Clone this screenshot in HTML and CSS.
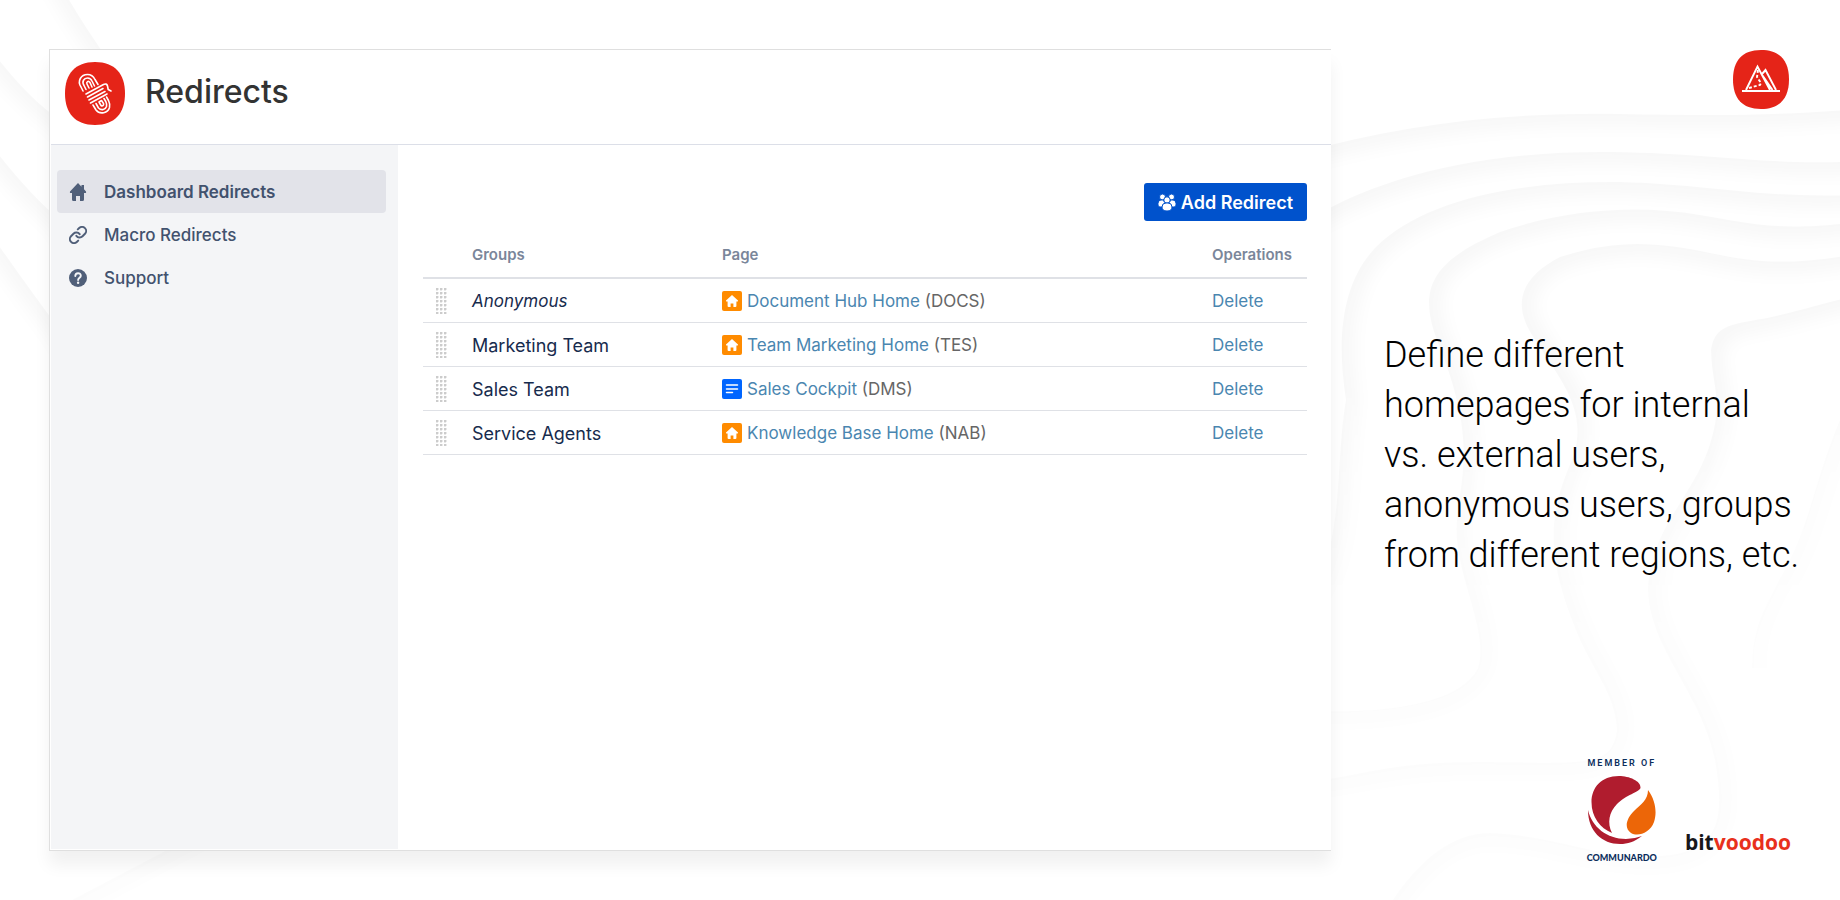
FILE: index.html
```
<!DOCTYPE html>
<html lang="en">
<head>
  <meta charset="UTF-8">
  <meta name="viewport" content="width=device-width, initial-scale=1.0">
  <title>Redirects</title>
  <link rel="stylesheet" href="styles.css">
</head>
<body>
  <!-- shared icons -->
  <svg class="sprite" aria-hidden="true">
    <symbol id="icon-home-page" viewBox="0 0 20 20">
      <rect width="20" height="20" rx="2" fill="#ff8b00"/>
      <path d="M10 4 4 9.600q-.3.900.6.900h1V15q0 1 1 1h2v-3.500h2.800V16h2q1 0 1-1v-4.500h1q.9 0 .6-.9z" fill="#fff"/>
    </symbol>
    <symbol id="icon-page" viewBox="0 0 20 20">
      <rect width="20" height="20" rx="2" fill="#0065ff"/>
      <path d="M4.500 6h11M4.500 10h11M4.500 13.500h6" stroke="#fff" stroke-width="1.500" stroke-linecap="round"/>
    </symbol>
  </svg>

  <!-- background relief: every contour is shaded on its inner side only -->
  <svg class="waves" viewBox="0 0 1840 900" preserveAspectRatio="xMaxYMid slice" aria-hidden="true">
    <defs>
      <filter id="soft" x="-20%" y="-20%" width="140%" height="140%"><feGaussianBlur stdDeviation="11"/></filter>
      <path id="w1" d="M30 -80C60 -10 80 40 300 300L1300 153C1400 125 1500 112 1620 114S1790 116 1920 104V980H-80V-80z"/>
      <path id="w2" d="M-80 -60Q0 80 60 120L300 400L1300 225C1370 180 1470 152 1600 152S1780 172 1920 156V980H-80z"/>
      <path id="w3" d="M-80 40Q0 170 60 220L300 600L1310 600C1345 540 1335 460 1346 400C1335 330 1345 280 1375 248C1420 202 1510 182 1610 182S1780 206 1920 190V980H-80z"/>
      <path id="w4" d="M-80 130Q0 250 60 330L300 700L1300 710C1380 715 1460 705 1478 668C1490 630 1452 570 1457 520S1475 440 1441 350C1415 290 1430 262 1500 232C1570 208 1640 205 1700 215S1790 236 1920 212V980H-80z"/>
      <path id="w5" d="M-80 980L300 780L1300 782C1360 778 1380 762 1480 762S1612 770 1617 730C1615 690 1590 670 1572 620C1545 550 1550 510 1572 460C1590 410 1560 380 1532 335C1510 300 1525 275 1560 257C1620 238 1660 243 1710 253S1800 270 1920 240V980z"/>
      <path id="w6" d="M1350 980C1385 900 1430 833 1490 833C1560 836 1600 860 1660 856S1725 820 1715 760C1700 690 1650 650 1648 590C1650 530 1690 500 1708 450C1725 400 1712 390 1711 350C1715 320 1740 325 1780 315S1850 296 1920 280V980z"/>
      <path id="w7" d="M1920 260L1840 420C1815 480 1810 520 1790 560S1752 620 1752 668L1800 980H1920z"/>
      <clipPath id="c1"><use href="#w1"/></clipPath>
      <clipPath id="c2"><use href="#w2"/></clipPath>
      <clipPath id="c3"><use href="#w3"/></clipPath>
      <clipPath id="c4"><use href="#w4"/></clipPath>
      <clipPath id="c5"><use href="#w5"/></clipPath>
      <clipPath id="c6"><use href="#w6"/></clipPath>
      <clipPath id="c7"><path d="M1920 260L1840 420C1815 480 1810 520 1790 560S1752 620 1752 668L1920 668z"/></clipPath>
    </defs>
    <g clip-path="url(#c1)"><use href="#w1" class="wave"/></g>
    <g clip-path="url(#c2)"><use href="#w2" class="wave"/></g>
    <g clip-path="url(#c3)"><use href="#w3" class="wave"/></g>
    <g clip-path="url(#c4)"><use href="#w4" class="wave"/></g>
    <g clip-path="url(#c5)"><use href="#w5" class="wave"/></g>
    <g clip-path="url(#c6)"><use href="#w6" class="wave"/></g>
    <g clip-path="url(#c7)"><use href="#w7" class="wave faint"/></g>
  </svg>

  <div class="layout">
    <main class="panel">
      <header class="panel-header">
        <svg class="app-logo" viewBox="0 0 60 63" aria-hidden="true">
          <path d="M30 0C50 0 60 12 60 31.500S50 63 30 63 0 51 0 31.500 10 0 30 0z" fill="#e52418"/>
          <g fill="none" stroke="#fff" stroke-width="1.600" stroke-linecap="round" stroke-linejoin="round">
            <path d="M18 29l-2-4c-4-6 0-12.500 6.500-12.500 4 0 6 2 7.500 5l3 5"/>
            <path d="M21 27.500l-2-4c-2.500-4 0-7.500 3.500-7.500 2.500 0 3.700 1 4.500 3l2.500 5"/>
            <path d="M24 26l-2-4c-1-2 1.500-4 3-1.500l2 4.500"/>
            <path d="M21 32l17.500-9.500c2-1 3.500-.5 4 1.500l.7 3.500 2.800 1.500"/>
            <path d="M22.500 35 38 26.500M24 38l16-8.500M25.500 41 42 32"/>
            <path d="M28 43l3 5c4 5 12 3 13.500-2.500.7-3 0-5-1-7L41.500 35"/>
            <path d="M31 41.500l2.500 4.500c3 3 7 1.500 8-1.500.5-2 0-3.500-.7-5L39 36.500"/>
            <path d="M34 40l2 3.500c1.500 1 3 0 2.500-2L36.500 38.500z"/>
          </g>
        </svg>
        <h1>Redirects</h1>
      </header>
      <div class="panel-body">
        <nav class="sidebar">
          <a class="nav-item active" href="#dashboard">
            <svg viewBox="0 0 18 18" aria-hidden="true"><path d="M9 0 1 8.500Q.500 10 1.500 10H3v6.500Q3 18 4.500 18H7v-5h4v5h2.500q1.500 0 1.500-1.500V10h1.500q1 0 .5-1.500L15 6.300V2H12.500v1.700z"/></svg>
            Dashboard Redirects
          </a>
          <a class="nav-item" href="#macro">
            <svg viewBox="1 1 22 22" aria-hidden="true"><g fill="none" stroke="#505f79" stroke-width="2.400" stroke-linecap="round"><path d="M10 13a5 5 0 0 0 7.540.540l3-3a5 5 0 0 0-7.070-7.070l-1.720 1.710"/><path d="M14 11a5 5 0 0 0-7.540-.540l-3 3a5 5 0 0 0 7.070 7.070l1.710-1.710"/></g></svg>
            Macro Redirects
          </a>
          <a class="nav-item" href="#support">
            <svg viewBox="0 0 18 18" aria-hidden="true"><circle cx="9" cy="9" r="9"/><path d="M6.300 7c0-3.800 5.500-3.600 5.500-.3 0 2-2.700 2-2.700 4.300" fill="none" stroke="#f4f5f7" stroke-width="1.900" stroke-linecap="round"/><circle cx="9.100" cy="13.700" r="1.200" fill="#f4f5f7"/></svg>
            Support
          </a>
        </nav>
        <section class="content">
          <button class="add-button" type="button">
            <svg viewBox="0 0 18 17" aria-hidden="true"><circle cx="4.500" cy="3" r="3"/><circle cx="13.500" cy="3" r="3"/><path d="M0 9.500Q0 6 3 6h2.500q.5 2 2 3Q5 10 4.500 13H2Q0 13 0 11zM18 9.500Q18 6 15 6h-2.500q-.5 2-2 3 2.500 1 3 4H16q2 0 2-2z"/><circle cx="9" cy="6" r="3.200"/><path d="M4 13q0-4 4-4h2q4 0 4 4 0 4-5 4t-5-4z"/></svg>
            Add Redirect
          </button>
          <table class="redirects">
            <thead>
              <tr><th class="col-drag"></th><th class="col-group">Groups</th><th>Page</th><th class="col-ops">Operations</th></tr>
            </thead>
            <tbody>
              <tr>
                <td><span class="grip"></span></td>
                <td><em>Anonymous</em></td>
                <td><div class="page"><svg aria-hidden="true"><use href="#icon-home-page"/></svg><span><a href="#docs">Document Hub Home</a> (DOCS)</span></div></td>
                <td><a href="#delete">Delete</a></td>
              </tr>
              <tr>
                <td><span class="grip"></span></td>
                <td class="group">Marketing Team</td>
                <td><div class="page"><svg aria-hidden="true"><use href="#icon-home-page"/></svg><span><a href="#tes">Team Marketing Home</a> (TES)</span></div></td>
                <td><a href="#delete">Delete</a></td>
              </tr>
              <tr>
                <td><span class="grip"></span></td>
                <td class="group">Sales Team</td>
                <td><div class="page"><svg aria-hidden="true"><use href="#icon-page"/></svg><span><a href="#dms">Sales Cockpit</a> (DMS)</span></div></td>
                <td><a href="#delete">Delete</a></td>
              </tr>
              <tr>
                <td><span class="grip"></span></td>
                <td class="group">Service Agents</td>
                <td><div class="page"><svg aria-hidden="true"><use href="#icon-home-page"/></svg><span><a href="#nab">Knowledge Base Home</a> (NAB)</span></div></td>
                <td><a href="#delete">Delete</a></td>
              </tr>
            </tbody>
          </table>
        </section>
      </div>
    </main>

    <aside class="promo">
      <svg class="brand-badge" viewBox="0 0 56 59" aria-hidden="true">
        <path d="M28 0C47 0 56 11 56 29.500S47 59 28 59 0 48 0 29.500 9 0 28 0z" fill="#e52418"/>
        <g fill="none" stroke="#fff" stroke-width="1.900">
          <path d="M9 41h38M13 40 24.500 16.500 37 40M29 24l3.500-4L43 40M29.500 25.500 39.500 40"/>
          <path d="M25 20l-1 7 4 6-1 2-11 3" stroke-dasharray="3 2"/>
        </g>
      </svg>
      <p class="caption">Define different homepages for internal vs. external users, anonymous users, groups from different regions, etc.</p>
      <div class="partners">
        <div class="communardo">
          <span class="member">MEMBER OF</span>
          <svg viewBox="0 0 68 68" aria-hidden="true">
            <path d="M52.500 12C53.500 5 41 0 31 0 13 0 3.500 12 3.500 26 3.500 41 12 52 24 57 19 47 21 36 29 28 38 19 51 16 52.500 12z" fill="#b01c2e"/>
            <path d="M60 14c8 11 9 23 6 32-4 11-16 15-23 11-7-5-5-14 3-22 7-7 14-11 14-21z" fill="#ec6608"/>
            <path d="M0 34c4 17 19 29 38 29q8 0 16-3c-8 6-14 8-22 8C14 68 0 55 0 34z" fill="#b01c2e"/>
          </svg>
          <span class="company">COMMUNARDO</span>
        </div>
        <div class="bitvoodoo"><span>bit</span>voodoo</div>
      </div>
    </aside>
  </div>
</body>
</html>
```
FILE: styles.css
```
* {
  margin: 0;
  padding: 0;
  box-sizing: border-box;
}
body {
  font-family: Inter, "Liberation Sans", sans-serif;
  font-size: 17px;
  color: #172b4d;
  background: #fff;
  overflow-x: hidden;
}
a {
  color: #4a86b0;
  text-decoration: none;
}
a:hover {
  text-decoration: underline;
}
.sprite {
  display: none;
}
.waves {
  position: absolute;
  inset: 0;
  width: 100%;
  height: 100%;
  z-index: -1;
  mask-image: linear-gradient(to bottom, #000 40%, rgba(0, 0, 0, 0.4) 70%);
}
.wave {
  fill: none;
  stroke: #000;
  stroke-width: 13;
  opacity: 0.06;
  filter: url(#soft);
}
.faint {
  opacity: 0.03;
}
.layout {
  display: grid;
  grid-template-columns: minmax(0, 1282fr) minmax(0, 509fr);
  min-height: 100vh;
  padding: 49px 0 49px 49px;
}
.panel {
  display: flex;
  flex-direction: column;
  padding: 0 0 1px 1px;
  background: #fff;
  border: 1px solid #dfdfdf;
  border-right: none;
  box-shadow: 0 14px 16px rgba(0, 0, 0, 0.06);
}
.panel-header {
  display: flex;
  gap: 20px;
  height: 95px;
  padding: 12px 14px;
  border-bottom: 1px solid #dcdfe8;
}
.app-logo {
  width: 60px;
  height: 63px;
}
h1 {
  font-size: 32px;
  font-weight: 500;
  line-height: 60px;
  color: #333;
}
.panel-body {
  display: flex;
  flex: 1;
}
.sidebar {
  flex: 0 0 347px;
  padding: 25px 12px 25px 6px;
  background: #f4f5f7;
}
.nav-item {
  display: flex;
  align-items: center;
  gap: 17px;
  height: 43px;
  padding: 0 12px;
  font-weight: 500;
  color: #42526e;
  border-radius: 4px;
}
.nav-item svg {
  width: 18px;
  height: 18px;
  fill: #505f79;
}
.nav-item.active {
  font-weight: 600;
  background: #e2e3e9;
}
.content {
  flex: 1;
  padding: 38px 24px 24px 25px;
}
.add-button {
  display: flex;
  align-items: center;
  gap: 5px;
  height: 38px;
  margin-left: auto;
  padding: 0 14px;
  font: 600 18px Inter, "Liberation Sans", sans-serif;
  color: #fff;
  background: #0052cc;
  border: none;
  border-radius: 3px;
  cursor: pointer;
}
.add-button svg {
  width: 18px;
  height: 17px;
  fill: #fff;
  stroke: #0052cc;
  stroke-width: 1;
}
.redirects {
  width: 100%;
  margin-top: 12px;
  border-collapse: collapse;
  table-layout: fixed;
}
.redirects th {
  height: 45px;
  padding-bottom: 2px;
  font-size: 15px;
  font-weight: 600;
  text-align: left;
  color: #7a869a;
  border-bottom: 2px solid #dfe1e6;
}
.redirects td {
  height: 44px;
  padding-top: 2px;
  border-bottom: 1px solid #dfe1e6;
}
.redirects .group {
  font-size: 18px;
}
.col-drag {
  width: 49px;
}
.col-group {
  width: 250px;
}
.col-ops {
  width: 95px;
}
.grip {
  display: block;
  width: 11px;
  height: 26px;
  margin-left: 13px;
  background: radial-gradient(circle at 1px 1px, #ccc 1px, transparent 2px) 0 0 / 4px 4px;
}
.page {
  display: flex;
  align-items: center;
  gap: 5px;
  color: #666;
}
.page svg {
  width: 20px;
  height: 20px;
}
.promo {
  display: flex;
  flex-direction: column;
  margin-bottom: -12px;
  padding: 1px 40px 0 53px;
}
.brand-badge {
  align-self: flex-end;
  width: 56px;
  height: 59px;
  margin-right: 11px;
}
.caption {
  margin: auto 0;
  padding-top: 42px;
  font-family: Roboto, sans-serif;
  font-size: 36px;
  font-weight: 300;
  line-height: 50px;
  color: #000;
}
.partners {
  display: flex;
  justify-content: flex-end;
  align-items: flex-end;
  gap: 28px;
  padding-right: 9px;
}
.communardo {
  display: flex;
  flex-direction: column;
  align-items: center;
  color: #0b2e5c;
}
.communardo svg {
  width: 68px;
  height: 68px;
  margin: 8px 0;
}
.member {
  font: 600 9px Roboto, sans-serif;
  letter-spacing: 2px;
}
.company {
  font: 900 9px Lato, sans-serif;
}
.bitvoodoo {
  padding-bottom: 9px;
  font: 700 21px "Open Sans", sans-serif;
  line-height: 24px;
  color: #e8301c;
}
.bitvoodoo span {
  color: #17171b;
}
```
